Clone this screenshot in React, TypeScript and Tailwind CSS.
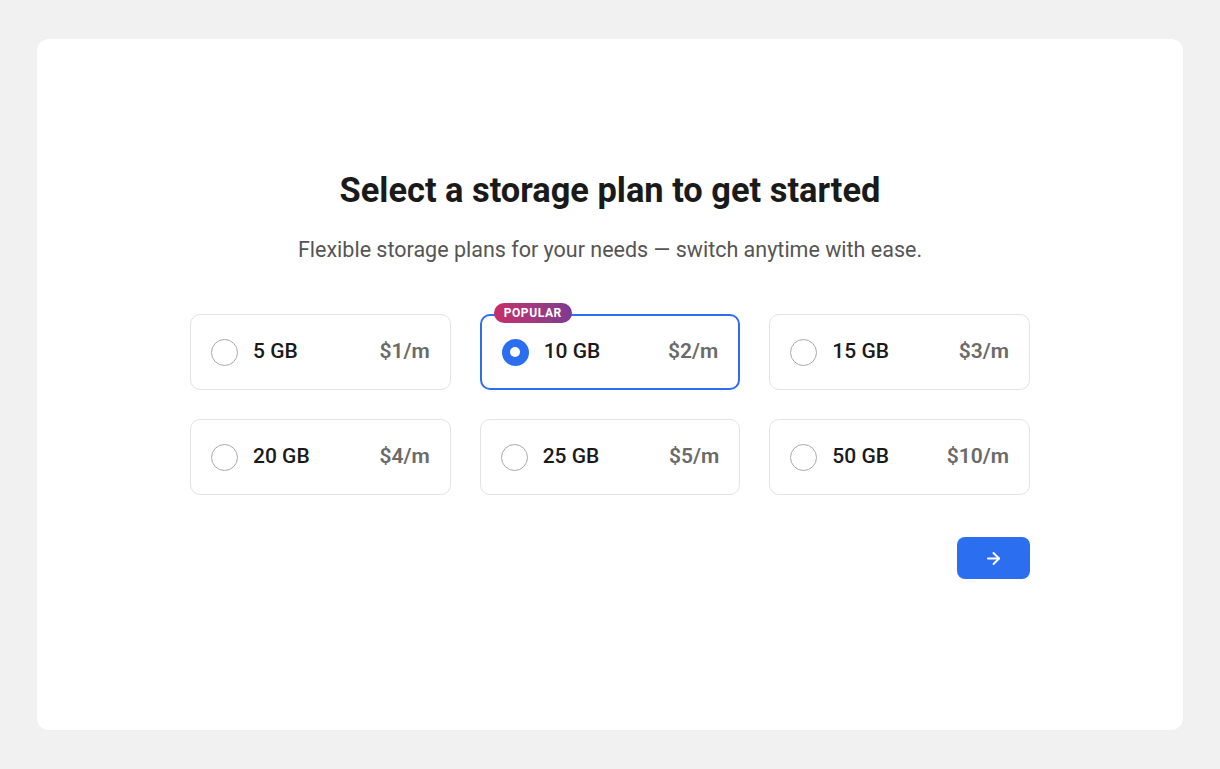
import { useState } from "react";
import { ArrowRight } from "lucide-react";

const PLANS = [
  { id: "5", size: "5 GB", price: "$1/m" },
  { id: "10", size: "10 GB", price: "$2/m", popular: true },
  { id: "15", size: "15 GB", price: "$3/m" },
  { id: "20", size: "20 GB", price: "$4/m" },
  { id: "25", size: "25 GB", price: "$5/m" },
  { id: "50", size: "50 GB", price: "$10/m" },
];

export default function App() {
  const [selected, setSelected] = useState("10");

  return (
    <div className="min-h-screen bg-[#f1f1f1] px-[37px] py-[39px] font-['Roboto',sans-serif]">
      <div className="flex h-[691px] flex-col items-center rounded-xl bg-white pt-[131px]">
        <h1 className="text-[34.4px] font-bold leading-[40px] text-[#1a1a1a]">
          Select a storage plan to get started
        </h1>
        <p className="mt-[28px] text-[21.5px] leading-[24px] text-[#555555]">
          Flexible storage plans for your needs — switch anytime with ease.
        </p>

        {/* Grille des plans */}
        <div className="mt-[52px] grid w-[840px] grid-cols-3 gap-x-[29px] gap-y-[29px]">
          {PLANS.map((plan) => {
            const active = selected === plan.id;
            return (
              <button
                key={plan.id}
                type="button"
                onClick={() => setSelected(plan.id)}
                className={`relative flex h-[76px] items-center rounded-[10px] border bg-white px-[20px] text-left ${
                  active ? "border-2 border-[#2b6ff0] px-[19px]" : "border-[#e3e3e3]"
                }`}
              >
                {plan.popular && (
                  <span className="absolute left-[12px] top-[-13px] rounded-full bg-gradient-to-r from-[#c72c68] to-[#7c3a92] px-[10px] py-[2px] text-[12px] font-bold leading-[16px] tracking-[0.6px] text-white">
                    POPULAR
                  </span>
                )}
                {active ? (
                  <span className="flex h-[27px] w-[27px] items-center justify-center rounded-full bg-[#2b6ff0]">
                    <span className="h-[10px] w-[10px] rounded-full bg-white" />
                  </span>
                ) : (
                  <span className="h-[27px] w-[27px] rounded-full border-[1.5px] border-[#a9a9a9]" />
                )}
                <span className="ml-[15px] text-[21px] font-medium text-[#1a1a1a]">
                  {plan.size}
                </span>
                <span className="ml-auto text-[21px] font-semibold text-[#6a6a6a]">
                  {plan.price}
                </span>
              </button>
            );
          })}
        </div>

        <div className="mt-[42px] flex w-[840px] justify-end">
          <button
            type="button"
            className="flex h-[42px] w-[73px] items-center justify-center rounded-lg bg-[#2b6ff0] text-white"
          >
            <ArrowRight size={19} strokeWidth={2.5} />
          </button>
        </div>
      </div>
    </div>
  );
}
